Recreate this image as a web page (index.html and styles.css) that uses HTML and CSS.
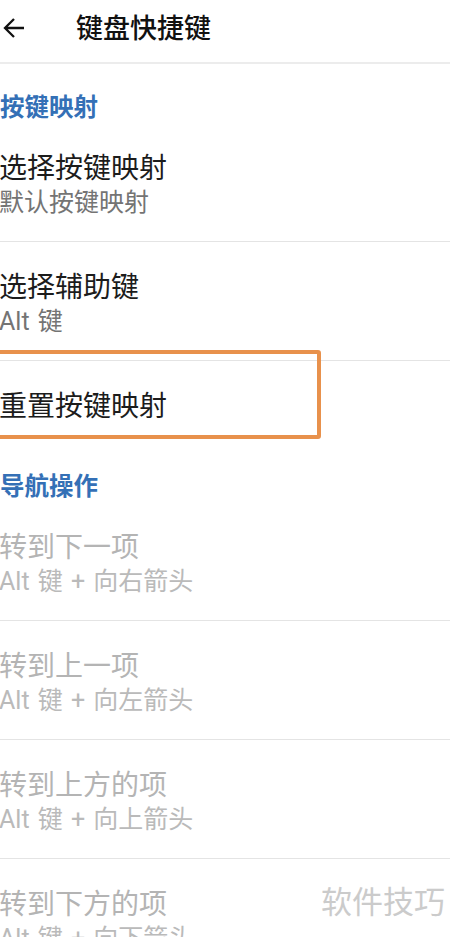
FILE: index.html
```html
<!DOCTYPE html>
<html lang="zh-CN">

<head>
	<meta charset="UTF-8">
	<title>键盘快捷键</title>
	<link rel="stylesheet" href="styles.css">
</head>

<body>
	<div class="app-bar">
		<svg class="back" width="24" height="24" viewBox="0 0 24 24">
			<path d="M22 12H3.5M12 3L3 12L12 21" fill="none" stroke="#111" stroke-width="2.3"/>
		</svg>
		<div class="app-title">键盘快捷键</div>
	</div>

	<div class="category">按键映射</div>
	<div class="pref">
		<div class="pref-title">选择按键映射</div>
		<div class="pref-summary">默认按键映射</div>
	</div>
	<div class="pref">
		<div class="pref-title">选择辅助键</div>
		<div class="pref-summary">Alt 键</div>
	</div>
	<div class="pref single last">
		<div class="pref-title">重置按键映射</div>
		<div class="highlight"></div>
	</div>

	<div class="category">导航操作</div>
	<div class="pref disabled">
		<div class="pref-title">转到下一项</div>
		<div class="pref-summary">Alt 键 + 向右箭头</div>
	</div>
	<div class="pref disabled">
		<div class="pref-title">转到上一项</div>
		<div class="pref-summary">Alt 键 + 向左箭头</div>
	</div>
	<div class="pref disabled">
		<div class="pref-title">转到上方的项</div>
		<div class="pref-summary">Alt 键 + 向上箭头</div>
	</div>
	<div class="pref disabled">
		<div class="pref-title">转到下方的项</div>
		<div class="pref-summary">Alt 键 + 向下箭头</div>
		<div class="watermark">软件技巧</div>
	</div>
</body>

</html>
```

FILE: styles.css
```css
body {
	margin: 0;
	background: #fff;
	font-family: Roboto, "Noto Sans CJK SC", sans-serif;
	overflow: hidden;
}

.app-bar {
	display: flex;
	align-items: center;
	height: 62px;
	border-bottom: 2px solid #ececec;
}
.back {
	margin-left: 2px;
	margin-top: -6px;
}
.app-title {
	margin-left: 50px;
	font-size: 27px;
	font-weight: 500;
	color: #111;
	margin-top: -10px;
}

.category {
	padding: 29px 0 0 0;
	line-height: 30px;
	font-size: 24.5px;
	font-weight: 700;
	color: #3470b6;
}

.pref {
	position: relative;
	padding: 29px 0 23px 0;
	border-bottom: 1px solid #e4e4e4;
}
.pref.single {
	padding: 29px 0 19px 0;
}
.pref.last {
	border-bottom: none;
}
.pref-title {
	font-size: 28px;
	line-height: 34px;
	color: #1c1c1c;
	margin-left: -1px;
}
.pref-summary {
	margin-top: 2px;
	font-size: 25px;
	line-height: 30px;
	color: #747474;
	margin-left: -1px;
	word-spacing: 2px;
}
.disabled .pref-title {
	color: #b4b4b4;
}
.disabled .pref-summary {
	color: #bababa;
}

.highlight {
	position: absolute;
	top: -11px;
	left: -8px;
	right: 129px;
	bottom: 4px;
	border: 4px solid #e8914c;
	border-radius: 3px;
}

.watermark {
	position: absolute;
	right: 5px;
	top: 27px;
	font-size: 31px;
	line-height: 34px;
	color: #cbcbcb;
}
```
